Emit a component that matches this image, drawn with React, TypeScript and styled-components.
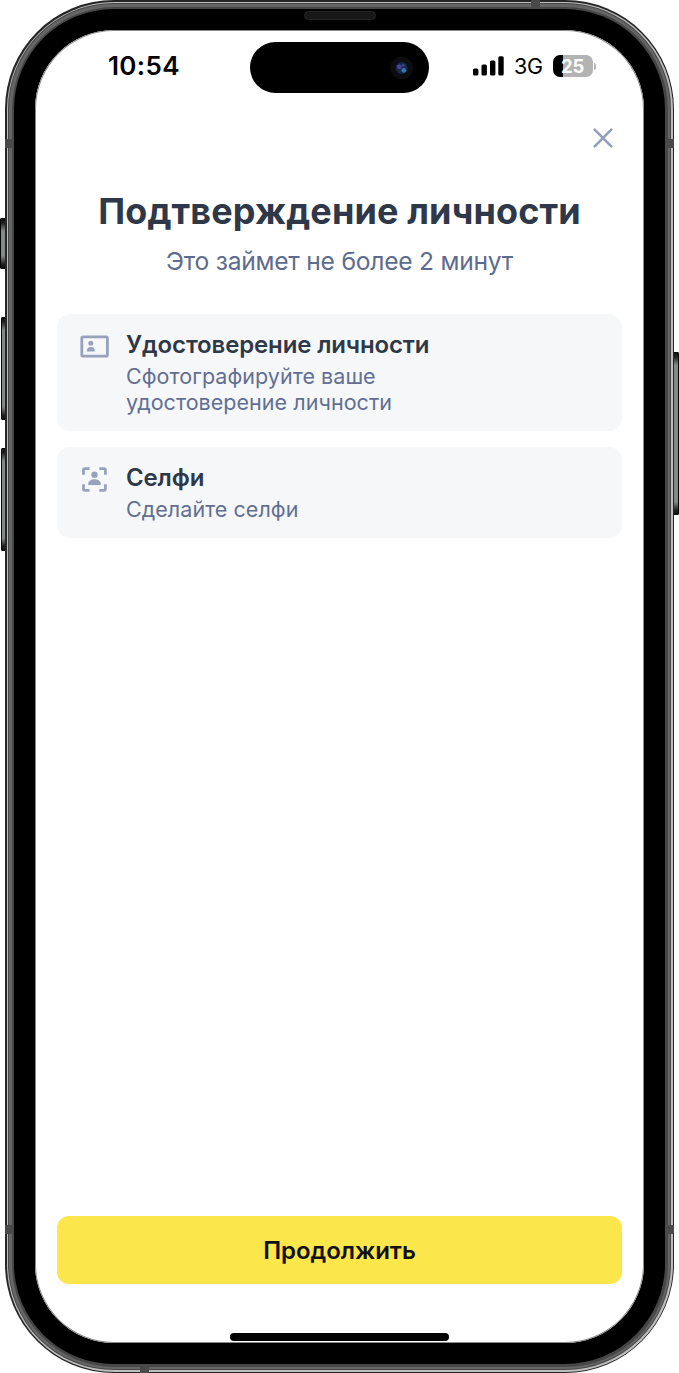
import React from 'react';
import styled, { createGlobalStyle } from 'styled-components';

const GlobalStyle = createGlobalStyle`
  * { box-sizing: border-box; }
  body { margin: 0; background: #fff; font-family: Inter, "Liberation Sans", sans-serif; }
  h1, h2, p { margin: 0; }
  svg { display: block; flex: none; }
`;

const Stage = styled.main`
  position: relative;
  width: 679px;
  height: 1373px;
  padding: 0 5px;
  overflow: hidden;
`;

const Shell = styled.div`
  position: relative;
  width: 669px;
  height: 1373px;
  border-radius: 109px;
  background: #262626;
  padding: 1.5px;
`;

const Highlight = styled.div`
  height: 100%;
  border-radius: 107.5px;
  background: #bdbdbd;
  padding: 1.5px;
`;

const Groove = styled.div`
  height: 100%;
  border-radius: 106px;
  background: #484848;
  padding: 1px;
`;

const Band = styled.div`
  height: 100%;
  border-radius: 105px;
  background: #666;
  padding: 2.5px;
`;

const InnerBand = styled.div`
  height: 100%;
  border-radius: 102.5px;
  background: #474747;
  padding: 2.5px;
`;

const Bezel = styled.div`
  height: 100%;
  border-radius: 100px;
  background: #000;
  padding: 21px 21px 21.5px;
`;

const Screen = styled.div`
  position: relative;
  display: flex;
  flex-direction: column;
  height: 100%;
  border-radius: 79px;
  background: #fff;
  box-shadow: inset 0 0 0 1px #8a8a8a;
  padding: 0 22px;
`;

const SideKey = styled.i<{ $side: 'left' | 'right'; $top: number; $height: number; $inset: number }>`
  position: absolute;
  ${p => p.$side}: ${p => p.$inset}px;
  top: ${p => p.$top}px;
  width: 6px;
  height: ${p => p.$height}px;
  border: 1px solid #080808;
  border-radius: ${p => (p.$side === 'left' ? '1px 0 0 1px' : '0 1px 1px 0')};
  background: linear-gradient(#111 0, #222 4px, #858888 12px, #858888 calc(100% - 12px), #222 calc(100% - 4px), #111 100%);
`;

const Antenna = styled.i<{ $edge: 'left' | 'right' | 'top' | 'bottom'; $at: number }>`
  position: absolute;
  ${p => p.$edge}: 0;
  ${p => (p.$edge === 'left' || p.$edge === 'right' ? 'top' : 'left')}: ${p => p.$at}px;
  width: 9px;
  height: 9px;
  background: #494949;
`;

const Speaker = styled.i`
  position: absolute;
  top: 11px;
  left: 299px;
  width: 72px;
  height: 9px;
  border-radius: 5px;
  border: 1px solid #252525;
  background: #171717;
`;

const Island = styled.div`
  position: absolute;
  top: 12px;
  left: 215px;
  display: flex;
  align-items: center;
  justify-content: flex-end;
  width: 179px;
  height: 51px;
  padding-right: 16px;
  border-radius: 26px;
  background: #000;
`;

const StatusBar = styled.header`
  display: flex;
  align-items: center;
  justify-content: space-between;
  height: 72px;
  padding: 0 29px 0 51px;
  color: #000;
`;

const Clock = styled.time`
  margin-top: -1px;
  font-size: 26px;
  font-weight: 600;
  letter-spacing: 0.35px;
`;

const Indicators = styled.div`
  display: flex;
  align-items: center;
`;

const Network = styled.span`
  width: 29px;
  margin: 0 10px 0 10px;
  font-size: 21.5px;
  letter-spacing: -0.4px;
`;

const Battery = styled.span`
  position: relative;
  width: 40px;
  height: 22px;
  padding-left: 8px;
  border-radius: 7px;
  background: linear-gradient(90deg, #000 10px, #b3b3b3 10px);
  color: #fff;
  font-size: 18.5px;
  font-weight: 700;
  letter-spacing: -0.2px;
  line-height: 22px;
  &::after {
    content: '';
    position: absolute;
    left: 41px;
    top: 8px;
    width: 2px;
    height: 7px;
    border-radius: 0 2px 2px 0;
    background: #b3b3b3;
  }
`;

const CloseButton = styled.button`
  align-self: flex-end;
  display: grid;
  place-items: center;
  width: 38px;
  height: 38px;
  margin-top: 17px;
  padding: 0;
  border: 0;
  background: none;
`;

const Title = styled.h1`
  margin-top: 31px;
  color: #2f3849;
  font-size: 36px;
  font-weight: 700;
  letter-spacing: 0.13px;
  line-height: 46px;
  text-align: center;
  white-space: nowrap;
`;

const Subtitle = styled.p`
  margin-top: 11px;
  color: #5d6b8f;
  font-size: 24.6px;
  letter-spacing: -0.23px;
  line-height: 32px;
  text-align: center;
  white-space: nowrap;
`;

const Steps = styled.section`
  display: flex;
  flex-direction: column;
  gap: 16px;
  margin-top: 37px;
`;

const Card = styled.article`
  display: flex;
  gap: 16px;
  padding: 15px 22px 16px 23px;
  border-radius: 13px;
  background: #f6f7f9;
`;

const CardIcon = styled.div`
  display: grid;
  place-items: center;
  width: 30px;
  height: 34px;
`;

const CardTitle = styled.h2`
  color: #2f3849;
  font-size: 24px;
  font-weight: 600;
  letter-spacing: -0.14px;
  line-height: 32px;
`;

const CardText = styled.p`
  max-width: 330px;
  margin-top: 2px;
  color: #626f92;
  font-size: 21.5px;
  letter-spacing: 0.04px;
  line-height: 26px;
`;

const ContinueButton = styled.button`
  height: 68.5px;
  margin: auto 0 58.5px;
  padding: 1px 6px 0;
  border: 0;
  border-radius: 12px;
  background: #fbe64b;
  color: #111;
  font: 600 24px Inter, "Liberation Sans", sans-serif;
  letter-spacing: -0.05px;
`;

const HomeBar = styled.i`
  position: absolute;
  bottom: 2px;
  left: 195px;
  width: 219px;
  height: 8px;
  border-radius: 4px;
  background: #000;
`;

const Camera = () => (
  <svg width="24" height="24" viewBox="0 0 24 24">
    <circle cx="12.6" cy="12" r="11.3" fill="#0d0d0f" />
    <circle cx="12.6" cy="12" r="6" fill="#18264b" />
    <circle cx="10.4" cy="10.8" r="2.3" fill="#51439a" />
    <circle cx="14.8" cy="14.3" r="2.4" fill="#3476a8" />
    <circle cx="14.4" cy="9.3" r="1.5" fill="#2d4b80" />
  </svg>
);

const Signal = () => (
  <svg width="31" height="20" viewBox="0 0 31 20">
    <rect x="0" y="12.5" width="5.4" height="7" rx="1.5" />
    <rect x="8.5" y="8.5" width="5.4" height="11" rx="1.5" />
    <rect x="17" y="4.5" width="5.4" height="15" rx="1.5" />
    <rect x="25.3" y="0.3" width="5.4" height="19.2" rx="1.5" />
  </svg>
);

const CloseIcon = () => (
  <svg width="20" height="20" viewBox="0 0 20 20" stroke="#929dbb" strokeWidth="2.5" strokeLinecap="round">
    <path d="M1.7 1.7 18.3 18.3M18.3 1.7 1.7 18.3" />
  </svg>
);

const IdIcon = () => (
  <svg width="30" height="24" viewBox="0 0 30 24" fill="#98a2bd">
    <rect x="1.8" y="2.8" width="25.6" height="19.4" rx="1.3" fill="none" stroke="#98a2bd" strokeWidth="2.8" />
    <circle cx="10.8" cy="9.3" r="2.5" />
    <path d="M6.9 17.5v-1c0-2.4 1.7-3.5 3.9-3.5s3.9 1.1 3.9 3.5v1Z" />
  </svg>
);

const SelfieIcon = () => (
  <svg width="30" height="28" viewBox="0 0 30 28" fill="#98a2bd">
    <path
      d="M3.5 9.7V4.9Q3.5 3.6 4.8 3.6H9.6M19.3 3.6h4.8q1.3 0 1.3 1.3v4.8M25.4 19.3v4.8q0 1.3-1.3 1.3h-4.8M9.6 25.4H4.8q-1.3 0-1.3-1.3v-4.8"
      fill="none"
      stroke="#98a2bd"
      strokeWidth="2.8"
    />
    <circle cx="14.5" cy="9.8" r="3.2" />
    <path d="M8.2 20.1V19c0-3 2.9-4.8 6.3-4.8s6.3 1.8 6.3 4.8v1.1Z" />
  </svg>
);

const steps = [
  { title: 'Удостоверение личности', text: 'Сфотографируйте ваше удостоверение личности', icon: <IdIcon /> },
  { title: 'Селфи', text: 'Сделайте селфи', icon: <SelfieIcon /> },
];

export default function App() {
  return (
    <>
      <GlobalStyle />
      <Stage>
        <SideKey $side="left" $top={218} $height={51} $inset={0} />
        <SideKey $side="left" $top={317} $height={103} $inset={1} />
        <SideKey $side="left" $top={448} $height={103} $inset={1} />
        <SideKey $side="right" $top={352} $height={163} $inset={0} />
        <Shell>
          <Highlight>
            <Groove>
              <Band>
                <InnerBand>
                  <Bezel>
                    <Screen>
                      <StatusBar>
                        <Clock>10:54</Clock>
                        <Indicators>
                          <Signal />
                          <Network>3G</Network>
                          <Battery>25</Battery>
                        </Indicators>
                      </StatusBar>
                      <Island>
                        <Camera />
                      </Island>
                      <CloseButton aria-label="Закрыть">
                        <CloseIcon />
                      </CloseButton>
                      <Title>Подтверждение личности</Title>
                      <Subtitle>Это займет не более 2 минут</Subtitle>
                      <Steps>
                        {steps.map(step => (
                          <Card key={step.title}>
                            <CardIcon>{step.icon}</CardIcon>
                            <div>
                              <CardTitle>{step.title}</CardTitle>
                              <CardText>{step.text}</CardText>
                            </div>
                          </Card>
                        ))}
                      </Steps>
                      <ContinueButton>Продолжить</ContinueButton>
                      <HomeBar />
                    </Screen>
                  </Bezel>
                </InnerBand>
              </Band>
            </Groove>
          </Highlight>
          <Antenna $edge="left" $at={139} />
          <Antenna $edge="right" $at={139} />
          <Antenna $edge="left" $at={1225} />
          <Antenna $edge="right" $at={1225} />
          <Antenna $edge="top" $at={526} />
          <Antenna $edge="bottom" $at={135} />
          <Speaker />
        </Shell>
      </Stage>
    </>
  );
}
